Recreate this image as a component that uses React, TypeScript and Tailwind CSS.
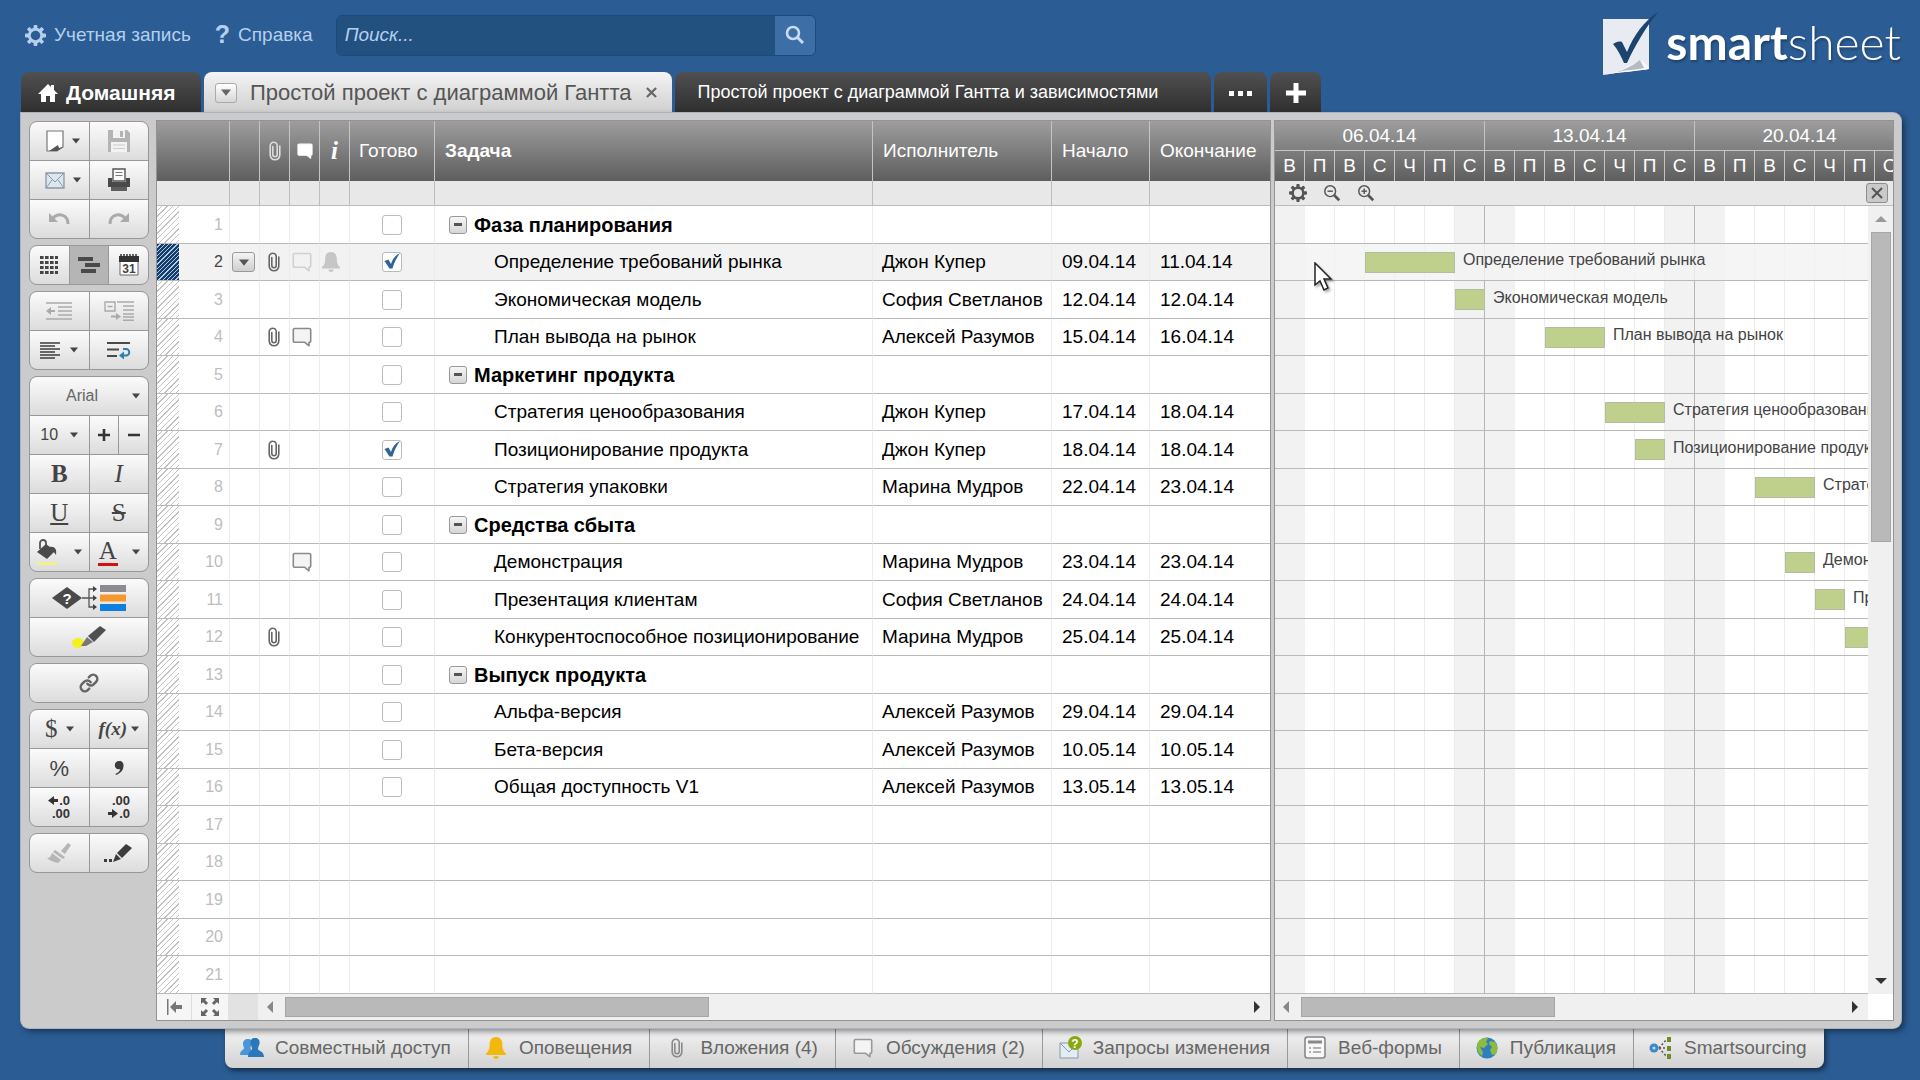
import React, { useState } from 'react';
import clsx from 'clsx';

type Task = {
  name?: string;
  phase?: boolean;
  owner?: string;
  start?: string;
  end?: string;
  done?: boolean;
  clip?: boolean;
  comment?: boolean;
  // day offset from 06.04.14 and length in days
  bar?: [number, number];
};

const DAY = 30;

const TASKS: Task[] = [
  { name: 'Фаза планирования', phase: true },
  { name: 'Определение требований рынка', owner: 'Джон Купер', start: '09.04.14', end: '11.04.14', done: true, clip: true, bar: [3, 3] },
  { name: 'Экономическая модель', owner: 'София Светланов', start: '12.04.14', end: '12.04.14', bar: [6, 1] },
  { name: 'План вывода на рынок', owner: 'Алексей Разумов', start: '15.04.14', end: '16.04.14', clip: true, comment: true, bar: [9, 2] },
  { name: 'Маркетинг продукта', phase: true },
  { name: 'Стратегия ценообразования', owner: 'Джон Купер', start: '17.04.14', end: '18.04.14', bar: [11, 2] },
  { name: 'Позиционирование продукта', owner: 'Джон Купер', start: '18.04.14', end: '18.04.14', done: true, clip: true, bar: [12, 1] },
  { name: 'Стратегия упаковки', owner: 'Марина Мудров', start: '22.04.14', end: '23.04.14', bar: [16, 2] },
  { name: 'Средства сбыта', phase: true },
  { name: 'Демонстрация', owner: 'Марина Мудров', start: '23.04.14', end: '23.04.14', comment: true, bar: [17, 1] },
  { name: 'Презентация клиентам', owner: 'София Светланов', start: '24.04.14', end: '24.04.14', bar: [18, 1] },
  { name: 'Конкурентоспособное позиционирование', owner: 'Марина Мудров', start: '25.04.14', end: '25.04.14', clip: true, bar: [19, 1] },
  { name: 'Выпуск продукта', phase: true },
  { name: 'Альфа-версия', owner: 'Алексей Разумов', start: '29.04.14', end: '29.04.14' },
  { name: 'Бета-версия', owner: 'Алексей Разумов', start: '10.05.14', end: '10.05.14' },
  { name: 'Общая доступность V1', owner: 'Алексей Разумов', start: '13.05.14', end: '13.05.14' },
  {}, {}, {}, {}, {},
];

const WEEKS = ['06.04.14', '13.04.14', '20.04.14'];
const DAYS = ['В', 'П', 'В', 'С', 'Ч', 'П', 'С'];

/* ---------- icons ---------- */

const Gear = ({ className }: { className?: string }) => (
  <svg viewBox="0 0 22 22" className={className} aria-hidden="true">
    <g fill="currentColor">
      {[0, 45, 90, 135].map((a) => (
        <rect key={a} x="9" y="0" width="4" height="22" rx="1" transform={`rotate(${a} 11 11)`} />
      ))}
      <circle cx="11" cy="11" r="8" />
    </g>
    <circle cx="11" cy="11" r="5" className="fill-(--hole)" />
  </svg>
);

const Magnifier = ({ className, sign }: { className?: string; sign?: '+' | '-' }) => (
  <svg viewBox="0 0 20 20" className={className} fill="none" stroke="currentColor" aria-hidden="true">
    <circle cx="8" cy="8" r="6" strokeWidth={sign ? 1.6 : 2.6} />
    <path d="M12.5 12.5 18 18" strokeWidth="3" />
    {sign && <path d="M5 8h6" strokeWidth="1.6" />}
    {sign === '+' && <path d="M8 5v6" strokeWidth="1.6" />}
  </svg>
);

const Clip = ({ className }: { className?: string }) => (
  <svg viewBox="0 0 12 20" className={className} fill="none" stroke="currentColor" strokeWidth="1.6" strokeLinecap="round" aria-hidden="true">
    <path d="M3.8 5.5v8a2.2 2.2 0 0 0 4.4 0V4.6A3.2 3.2 0 0 0 5 1.2 3.6 3.6 0 0 0 1.2 5v8.8A4.8 4.8 0 0 0 6 18.8a4.8 4.8 0 0 0 4.8-5V5" />
  </svg>
);

const Bubble = ({ className, fill = 'none' }: { className?: string; fill?: string }) => (
  <svg viewBox="0 0 20 20" className={className} fill={fill} stroke="currentColor" strokeWidth="1.6" strokeLinejoin="round" aria-hidden="true">
    <path d="M2.5 1.5h15a1.2 1.2 0 0 1 1.2 1.2v11.300a1.200 1.200 0 0 1-1.200 1.200H17v3.600l-4.500-3.600h-10a1.2 1.2 0 0 1-1.2-1.2V2.7a1.2 1.2 0 0 1 1.2-1.2Z" />
  </svg>
);

const Bell = ({ className }: { className?: string }) => (
  <svg viewBox="0 0 20 22" className={className} fill="currentColor" aria-hidden="true">
    <path d="M10 1c-3.6 0-5.8 2.6-5.8 6.2 0 4.4-.6 6.8-3.2 8.8v1.5h18V16c-2.6-2-3.2-4.4-3.2-8.8C15.8 3.6 13.6 1 10 1Z" />
    <path d="M7.5 18.5h5a2.500 2.500 0 0 1-5 0Z" />
  </svg>
);

const Caret = ({ className = 'size-2' }: { className?: string }) => (
  <svg viewBox="0 0 8 5" className={className} fill="currentColor" aria-hidden="true">
    <path d="M0 0h8L4 5Z" />
  </svg>
);

const Arrow = ({ dir, className }: { dir: 'left' | 'right' | 'up' | 'down'; className?: string }) => {
  const d = { left: 'M8 1v12L2 7Z', right: 'M6 1v12l6-6Z', up: 'M1 10h12L7 4Z', down: 'M1 4h12l-6 6Z' }[dir];
  return (
    <svg viewBox="0 0 14 14" className={clsx('size-[14px]', className)} fill="currentColor" aria-hidden="true">
      <path d={d} />
    </svg>
  );
};

const LogoMark = () => (
  <svg viewBox="0 0 60 66" className="h-[66px] w-[60px]" aria-hidden="true">
    <path d="M3 8h46v50C38 60 20 61 3 64Z" fill="#e9ebf2" />
    <path d="M3 64 16 61 41 49l8 7v2C38 60 20 61 3 64Z" fill="#f8f9fb" />
    <path d="M16 61c8-2 16-6 24-12l4 8c-9 2-18 2-28 4Z" fill="#b7bac2" />
    <path d="M13 33c3-2 6-3 9-2l5 10C34 24 44 10 58 1 47 15 35 34 27 52h-3c-3-7-6-13-11-19Z" fill="#1c446f" />
  </svg>
);

/* ---------- left toolbar ---------- */

function Tool({ label, active, className, children }: { label: string; active?: boolean; className?: string; children: React.ReactNode }) {
  return (
    <button
      type="button"
      aria-label={label}
      className={clsx(
        'flex h-[38px] min-w-0 flex-1 items-center justify-center text-[#444]',
        active ? 'bg-[#b5b5b5]' : 'bg-linear-to-b from-[#fbfbfb] to-[#dcdcdc]',
        className,
      )}
    >
      {children}
    </button>
  );
}

const Group = ({ children }: { children: React.ReactNode }) => (
  <div className="flex flex-col gap-px overflow-hidden rounded-lg border border-[#989898] bg-[#989898]">{children}</div>
);

const Row = ({ children }: { children: React.ReactNode }) => <div className="flex gap-px">{children}</div>;

function Toolbar() {
  return (
    <div role="toolbar" aria-label="Панель инструментов" className="flex w-[120px] shrink-0 flex-col gap-1.5">
      <Group>
        <Row>
          <Tool label="Создать" className="gap-2">
            <svg viewBox="0 0 18 22" className="ml-2 h-[22px] w-[18px]">
              <path d="M1 1h16v16l-6 4H1Z" fill="#fff" stroke="#777" strokeWidth="1.2" />
              <path d="m3 21 9-6 1 3 4-1-6 4Z" fill="#555" />
            </svg>
            <Caret />
          </Tool>
          <Tool label="Сохранить">
            <svg viewBox="0 0 22 22" className="size-[22px]">
              <path d="M0 0h19l3 3v19H0Z" fill="#b4b4b4" />
              <path d="M5 0h12v8H5zM3 12h16v10H3z" fill="#f2f2f2" />
              <path d="M12 1h3v6h-3z" fill="#b4b4b4" />
              <path d="M5 15h12M5 18.5h12" stroke="#ccc" />
            </svg>
          </Tool>
        </Row>
        <Row>
          <Tool label="Отправить" className="gap-2">
            <svg viewBox="0 0 20 17" className="ml-2 h-[17px] w-5">
              <path d="M1 1h18v15H1Z" fill="#dbe6f1" stroke="#8a97a5" strokeWidth="1.3" />
              <path d="m1 1 9 9 9-9M1 16l6-8M19 16l-6-8" fill="none" stroke="#8a97a5" />
            </svg>
            <Caret />
          </Tool>
          <Tool label="Печать">
            <svg viewBox="0 0 24 24" className="size-6">
              <path d="M6 1h12v12H6Z" fill="#fafafa" stroke="#555" strokeWidth="1.4" />
              <path d="M8.5 4.5h7M8.5 7.5h7" stroke="#777" />
              <path d="M1 10h4v4h14v-4h4v9H1Z" fill="#4a4a4a" />
              <path d="M4 19h16v4H4Z" fill="#5e5e5e" />
            </svg>
          </Tool>
        </Row>
        <Row>
          <Tool label="Отменить">
            <svg viewBox="0 0 22 14" className="h-[14px] w-[22px]">
              <path d="M5 6c6-6 15-3 15 6" fill="none" stroke="#aaa" strokeWidth="3" />
              <path d="M1 1v9h9Z" fill="#aaa" />
            </svg>
          </Tool>
          <Tool label="Повторить">
            <svg viewBox="0 0 22 14" className="h-[14px] w-[22px]">
              <path d="M17 6C11 0 2 3 2 12" fill="none" stroke="#aaa" strokeWidth="3" />
              <path d="M21 1v9h-9Z" fill="#aaa" />
            </svg>
          </Tool>
        </Row>
      </Group>

      <Group>
        <Row>
          <Tool label="Таблица">
            <svg viewBox="0 0 18 18" className="size-[18px]" fill="#444">
              {[0, 5, 10, 15].map((y) => [0, 5, 10, 15].map((x) => <rect key={`${x}-${y}`} x={x} y={y} width="3.6" height="3" />))}
            </svg>
          </Tool>
          <Tool label="Диаграмма Гантта" active>
            <svg viewBox="0 0 24 18" className="h-[18px] w-6" fill="#4a4a4a">
              <path d="M1 1h15v4H1zM8 7h15v4H8zM4 13h15v4H4z" />
            </svg>
          </Tool>
          <Tool label="Календарь">
            <svg viewBox="0 0 20 22" className="h-[22px] w-5">
              <path d="M1 3h18v18H1Z" fill="#fff" stroke="#666" />
              <path d="M0 2h20v6H0Z" fill="#333" />
              <path d="M2 2V0M5 2V0M8 2V0M11 2V0M14 2V0M17 2V0" stroke="#333" strokeWidth="1.5" />
              <text x="10" y="18.5" textAnchor="middle" fontSize="12" fontWeight="700" fill="#444">31</text>
            </svg>
          </Tool>
        </Row>
      </Group>

      <Group>
        <Row>
          <Tool label="Уменьшить отступ">
            <svg viewBox="0 0 26 18" className="h-[18px] w-[26px]" stroke="#aaa" strokeWidth="1.4" fill="none">
              <path d="M0 1h26M12 5h14M12 9h14M12 13h14M0 17h26" />
              <path d="M9 9H3" strokeWidth="2" />
              <path d="M5 5v8L0 9Z" fill="#aaa" stroke="none" />
            </svg>
          </Tool>
          <Tool label="Увеличить отступ">
            <svg viewBox="0 0 30 20" className="h-5 w-[30px]" stroke="#aaa" strokeWidth="1.4" fill="none">
              <path d="M1 1h10v9H1zM3.5 5.5h5" />
              <path d="M13 1h17M19 5h11M19 9h11M19 13h11M19 16h11M19 19.3h11" />
              <path d="M7 15.500h6" strokeWidth="2" />
              <path d="M12 12v7l5-3.5Z" fill="#aaa" stroke="none" />
            </svg>
          </Tool>
        </Row>
        <Row>
          <Tool label="Выравнивание" className="gap-2.5">
            <svg viewBox="0 0 20 17" className="h-[17px] w-5" stroke="#3c3c3c" strokeWidth="1.6">
              <path d="M0 1h20M0 4h15M0 7h20M0 10h15M0 13h20M0 16h15" />
            </svg>
            <Caret />
          </Tool>
          <Tool label="Перенос текста">
            <svg viewBox="0 0 24 17" className="h-[17px] w-6" fill="none">
              <path d="M0 1h23M0 7.500h12M0 14h10" stroke="#4a4a4a" strokeWidth="1.8" />
              <path d="M16 7h3a3 3 0 0 1 0 6.5h-3" stroke="#2f7fae" strokeWidth="2" />
              <path d="M17 9.5v8l-5-4Z" fill="#2f7fae" />
            </svg>
          </Tool>
        </Row>
      </Group>

      <Group>
        <Row>
          <Tool label="Шрифт" className="justify-end gap-[34px] pr-2">
            <span className="text-[16px] text-[#666]">Arial</span>
            <Caret />
          </Tool>
        </Row>
        <Row>
          <Tool label="Размер шрифта" className="gap-3">
            <span className="text-[16px]">10</span>
            <Caret />
          </Tool>
          <div className="flex flex-1 gap-px">
            <Tool label="Увеличить">
              <svg viewBox="0 0 12 12" className="size-3"><path d="M6 0v12M0 6h12" stroke="#333" strokeWidth="2.6" /></svg>
            </Tool>
            <Tool label="Уменьшить">
              <svg viewBox="0 0 12 12" className="size-3"><path d="M0 6h12" stroke="#333" strokeWidth="2.6" /></svg>
            </Tool>
          </div>
        </Row>
        <Row>
          <Tool label="Полужирный" className="font-['Liberation_Serif',serif] text-[25px] font-bold">B</Tool>
          <Tool label="Курсив" className="font-['Liberation_Serif',serif] text-[25px] italic">I</Tool>
        </Row>
        <Row>
          <Tool label="Подчеркнутый" className="font-['Liberation_Serif',serif] text-[25px] underline">U</Tool>
          <Tool label="Зачеркнутый" className="font-['Liberation_Serif',serif] text-[25px] line-through">S</Tool>
        </Row>
        <Row>
          <Tool label="Цвет фона" className="gap-3.5">
            <svg viewBox="0 0 24 26" className="h-[26px] w-6">
              <path d="M4 10V4a3 3 0 0 1 6 0v6" fill="none" stroke="#555" strokeWidth="1.8" />
              <path d="m1 13 9-8 9 7-8 8Z" fill="#4a4a4a" />
              <path d="M13 8c6-1 8 2 7 8l-3-4Z" fill="#4a4a4a" />
              <path d="M1 23h20v3H1Z" fill="#f3f08a" />
            </svg>
            <Caret />
          </Tool>
          <Tool label="Цвет текста" className="gap-3.5">
            <span className="h-[27px] w-5 border-b-[3px] border-[#d21212] text-center font-['Liberation_Serif',serif] text-[25px] leading-6">A</span>
            <Caret />
          </Tool>
        </Row>
      </Group>

      <Group>
        <Row>
          <Tool label="Условное форматирование">
            <svg viewBox="0 0 74 28" className="h-7 w-[74px]">
              <path d="M0 14 15 3l15 11-15 11Z" fill="#4a4a4a" />
              <text x="15" y="19.5" textAnchor="middle" fontSize="15" fontWeight="700" fill="#fff">?</text>
              <path d="M30 14h14M37 14V5h7M37 14v9h7" stroke="#555" strokeWidth="1.3" fill="none" />
              <path d="m41 2 4 3-4 3zM41 11l4 3-4 3zM41 20l4 3-4 3z" fill="#444" />
              <path d="M48 1h26v7H48Z" fill="#8b8b90" />
              <path d="M48 10.500h26v7H48Z" fill="#f7972f" />
              <path d="M48 20h26v7H48Z" fill="#0c7fe0" />
            </svg>
          </Tool>
        </Row>
        <Row>
          <Tool label="Выделить изменения">
            <svg viewBox="0 0 34 24" className="h-6 w-[34px]">
              <ellipse cx="6" cy="18" rx="6" ry="5" fill="#f6f01c" />
              <path d="m9 21 6-9 6 5-7 4Z" fill="#777" />
              <path d="m16 11 12-10 6 4-12 12Z" fill="#4f4f4f" />
            </svg>
          </Tool>
        </Row>
      </Group>

      <Group>
        <Row>
          <Tool label="Гиперссылка">
            <svg viewBox="0 0 24 24" className="size-5" fill="none" stroke="#666" strokeWidth="3" strokeLinecap="round">
              <path d="M10 13a5 5 0 0 0 7.54.54l3-3a5 5 0 0 0-7.07-7.07l-1.72 1.71" />
              <path d="M14 11a5 5 0 0 0-7.54-.54l-3 3a5 5 0 0 0 7.07 7.07l1.71-1.71" />
            </svg>
          </Tool>
        </Row>
      </Group>

      <Group>
        <Row>
          <Tool label="Денежный формат" className="gap-2">
            <span className="font-['Liberation_Serif',serif] text-[25px]">$</span>
            <Caret />
          </Tool>
          <Tool label="Функции" className="gap-1">
            <span className="font-['Liberation_Serif',serif] text-[19px] font-bold italic">f(x)</span>
            <Caret />
          </Tool>
        </Row>
        <Row>
          <Tool label="Процентный формат" className="text-[22px]">%</Tool>
          <Tool label="Разделитель">
            <svg viewBox="0 0 10 14" className="h-[14px] w-2.5" fill="#3c3c3c">
              <path d="M5 0a4 4 0 0 1 4.500 4.500C9.500 9 7 12 2 14l-.5-1c3-1.500 4.500-3 4.500-5C3 9 .8 7 .8 4.300A4.200 4.200 0 0 1 5 0Z" />
            </svg>
          </Tool>
        </Row>
        <Row>
          <Tool label="Уменьшить разрядность">
            <svg viewBox="0 0 24 32" className="h-8 w-6" fill="#333">
              <path d="M11 8H7V5L1 9.500 7 14v-3h4Z" />
              <text x="23" y="14" textAnchor="end" fontSize="13" fontWeight="700">.0</text>
              <text x="23" y="27" textAnchor="end" fontSize="13" fontWeight="700">.00</text>
            </svg>
          </Tool>
          <Tool label="Увеличить разрядность">
            <svg viewBox="0 0 24 32" className="h-8 w-6" fill="#333">
              <text x="23" y="14" textAnchor="end" fontSize="13" fontWeight="700">.00</text>
              <path d="M1 21h4v-3l6 4.500L5 27v-3H1Z" />
              <text x="23" y="27" textAnchor="end" fontSize="13" fontWeight="700">.0</text>
            </svg>
          </Tool>
        </Row>
      </Group>

      <Group>
        <Row>
          <Tool label="Формат по образцу">
            <svg viewBox="0 0 24 20" className="h-5 w-6" fill="#b5b5b5">
              <path d="m14 8 7-8 3 2-6 9Z" />
              <path d="m8 7 10 7-2 2L6 9Z" />
              <path d="m5 10 9 7-3 3c-4-1-8-2-11-5 3 0 4-2 5-5Z" />
            </svg>
          </Tool>
          <Tool label="Журнал">
            <svg viewBox="0 0 30 20" className="h-5 w-[30px]" fill="#3c3c3c">
              <path d="M0 16h3v3H0zM5 16h3v3H5zM9 19l3-8 5 5Z" />
              <path d="m13 10 9-9 6 4-10 10Z" />
            </svg>
          </Tool>
        </Row>
      </Group>
    </div>
  );
}

/* ---------- sheet ---------- */

function DoneBox({ label, initial }: { label: string; initial: boolean }) {
  const [on, setOn] = useState(initial);
  return (
    <span className="relative mx-auto block size-5">
      <input
        type="checkbox"
        aria-label={label}
        checked={on}
        onChange={() => setOn(!on)}
        className="block size-5 appearance-none rounded-[3px] border border-[#bbb] bg-white"
      />
      {on && (
        <svg viewBox="0 0 20 20" className="pointer-events-none absolute inset-0 size-5" aria-hidden="true">
          <path d="m2.500 9 4-1.500 2.500 4.500C10.500 7 13 3.500 18 1c-3.500 5-6 10-7.500 15.500H7.500Z" fill="#2f6496" />
        </svg>
      )}
    </span>
  );
}

const headCell = 'h-[60px] border-r border-[#c4c4c4] p-0 font-normal';
const bandCell = 'h-[25px] border-r border-b border-[#bcbcbc] p-0';

function Sheet() {
  return (
    <div className="flex w-[1113px] shrink-0 flex-col bg-white shadow-[0_0_0_1px_#939393]">
      <table className="w-full table-fixed border-separate border-spacing-0">
        <colgroup>
          <col className="w-[22px]" />
          <col className="w-[51px]" />
          <col className="w-[30px]" />
          <col className="w-[30px]" />
          <col className="w-[30px]" />
          <col className="w-[30px]" />
          <col className="w-[85px]" />
          <col />
          <col className="w-[179px]" />
          <col className="w-[98px]" />
          <col className="w-[120px]" />
        </colgroup>
        <thead className="text-left text-[19px] text-white">
          <tr className="bg-linear-to-b from-[#9e9e9e] to-[#5e5e5e]">
            <th colSpan={2} className={headCell} aria-label="Номер строки" />
            <th className={headCell} aria-label="Меню" />
            <th className={headCell} aria-label="Вложения"><Clip className="mx-auto h-5 w-3 text-[#dcdcdc]" /></th>
            <th className={headCell} aria-label="Обсуждения"><Bubble className="mx-auto size-4 text-white" fill="#fff" /></th>
            <th className={clsx(headCell, 'text-center')} aria-label="Сведения">
              <span className="font-['Liberation_Serif',serif] text-[25px] font-bold italic">i</span>
            </th>
            <th className={clsx(headCell, 'pl-[9px]')}>Готово</th>
            <th className={headCell}><span className="pl-2.5 font-bold">Задача</span></th>
            <th className={clsx(headCell, 'pl-2.5')}>Исполнитель</th>
            <th className={clsx(headCell, 'pl-2.5')}>Начало</th>
            <th className="h-[60px] p-0 pl-2.5 font-normal">Окончание</th>
          </tr>
          <tr className="bg-[#e8e8e8]">
            <td colSpan={2} className={bandCell} />
            <td className={bandCell} />
            <td className={bandCell} />
            <td className={bandCell} />
            <td className={bandCell} />
            <td className={bandCell} />
            <td className={bandCell} />
            <td className={bandCell} />
            <td className={bandCell} />
            <td className="h-[25px] border-b border-[#bcbcbc] p-0" />
          </tr>
        </thead>
        <tbody className="text-[19px] leading-6 text-black [&_td]:border-b [&_td]:border-b-[#b9b9b9] [&_td]:p-0 [&_td]:whitespace-nowrap">
          {TASKS.map((t, i) => {
            const current = i === 1;
            const cell = 'border-r border-r-[#ececec]';
            return (
              <tr key={i} className={clsx(i % 2 ? 'h-[37px]' : 'h-[38px]', current && 'bg-[#f2f2f2]')}>
                <td
                  className={
                    current
                      ? 'bg-[repeating-linear-gradient(135deg,#123f70_0,#123f70_2px,#b9cadb_2px,#b9cadb_3px)]'
                      : 'bg-[repeating-linear-gradient(135deg,#fff_0,#fff_3px,#c2c2c2_3px,#c2c2c2_4px)]'
                  }
                />
                <td className={clsx(cell, 'text-right text-[16px]', current ? 'text-[#444]' : 'text-[#bdbdbd]')}>
                  <span className="pr-1.5">{i + 1}</span>
                </td>
                <td className={cell}>
                  {current && (
                    <button type="button" aria-label="Меню строки" className="ml-0.5 flex h-5 w-[23px] items-center justify-center rounded-[3px] border border-[#999] bg-linear-to-b from-[#f4f4f4] to-[#cfcfcf] text-[#555]">
                      <Caret className="h-[7px] w-2.5" />
                    </button>
                  )}
                </td>
                <td className={cell}>{t.clip && <Clip className="ml-2 h-5 w-3 text-[#666]" />}</td>
                <td className={cell}>
                  {t.comment && <Bubble className="ml-0.5 size-5 text-[#8a8a8a]" fill="#f4f4f4" />}
                  {current && <Bubble className="ml-0.5 size-5 text-[#d0d0d0]" />}
                </td>
                <td className={cell}>{current && <Bell className="ml-px h-[22px] w-5 text-[#c6c6c6]" />}</td>
                <td className={cell}>
                  {t.name && <DoneBox label={`Готово: ${t.name}`} initial={!!t.done} />}
                </td>
                <td className={cell}>
                  {t.phase ? (
                    <div className="flex items-center gap-[7px] pl-3.5 text-[20px] font-bold">
                      <button type="button" aria-label="Свернуть" className="flex size-[18px] items-center justify-center rounded-[3px] border border-[#999] bg-linear-to-b from-[#f6f6f6] to-[#d6d6d6]">
                        <span className="h-[3px] w-2 bg-[#555]" />
                      </button>
                      {t.name}
                    </div>
                  ) : (
                    <div className="pl-[59px]">{t.name}</div>
                  )}
                </td>
                <td className={cell}><span className="pl-[9px]">{t.owner}</span></td>
                <td className={cell}><span className="pl-2.5">{t.start}</span></td>
                <td><span className="pl-2.5">{t.end}</span></td>
              </tr>
            );
          })}
        </tbody>
      </table>
      <div className="flex h-[26px] items-center bg-[#f0f0f0]">
        <button type="button" aria-label="К началу" className="flex h-full w-[35px] items-center justify-center border-r border-[#ddd] bg-[#f6f6f6]">
          <svg viewBox="0 0 16 16" className="size-4" fill="#777"><path d="M1 0h1.500v16H1zM4 8l6-6v4h6v4h-6v4Z" /></svg>
        </button>
        <button type="button" aria-label="Развернуть" className="flex h-full w-9 items-center justify-center bg-[#f6f6f6]">
          <svg viewBox="0 0 20 20" className="size-5" fill="none" stroke="#666" strokeWidth="3">
            <path d="m2 2 5 5M18 2l-5 5M2 18l5-5M18 18l-5-5" />
            <path d="M1 1h6L1 7ZM19 1h-6l6 6ZM1 19h6l-6-6ZM19 19h-6l6-6Z" fill="#666" stroke="none" />
          </svg>
        </button>
        <span className="h-full w-[30px] bg-[#e2e2e2]" />
        <span className="flex w-[27px] justify-center text-[#888]"><Arrow dir="left" /></span>
        <span className="h-5 w-[424px] border border-[#a6a6a6] bg-[#b9b9b9]" />
        <Arrow dir="right" className="mr-2 ml-auto text-[#333]" />
      </div>
    </div>
  );
}

/* ---------- gantt ---------- */

function Gantt() {
  return (
    <div className="relative flex min-w-0 flex-1 flex-col bg-white shadow-[0_0_0_1px_#939393]">
      <div className="flex h-[60px] overflow-hidden bg-linear-to-b from-[#9e9e9e] to-[#5e5e5e] text-white">
        {WEEKS.map((w) => (
          <div key={w} className="flex w-[210px] shrink-0 flex-col">
            <div className="h-[30px] border-r border-b border-[#c4c4c4] text-center text-[19px] leading-[30px]">{w}</div>
            <div className="flex h-[30px]">
              {DAYS.map((d, i) => (
                <span key={i} className="w-[30px] border-r border-[#c4c4c4] text-center text-[19px] leading-[30px]">{d}</span>
              ))}
            </div>
          </div>
        ))}
      </div>
      <div className="flex h-[25px] items-center gap-4 border-b border-[#bcbcbc] bg-[#e8e8e8] pr-[5px] pl-[14px] text-[#555] [--hole:#e8e8e8]">
        <button type="button" aria-label="Настройки"><Gear className="size-[18px]" /></button>
        <button type="button" aria-label="Уменьшить масштаб"><Magnifier sign="-" className="size-[18px]" /></button>
        <button type="button" aria-label="Увеличить масштаб"><Magnifier sign="+" className="size-[18px]" /></button>
        <button type="button" aria-label="Закрыть диаграмму" className="ml-auto flex h-5 w-[22px] items-center justify-center rounded-[3px] border border-[#8d8d8d] bg-[#c9c9c9]">
          <svg viewBox="0 0 12 12" className="size-3"><path d="m1 1 10 10M11 1 1 11" stroke="#555" strokeWidth="2" /></svg>
        </button>
      </div>
      <div className="flex">
        <div className="min-w-0 flex-1 overflow-hidden bg-[repeating-linear-gradient(90deg,#f2f2f2_0,#f2f2f2_30px,transparent_30px,transparent_180px,#f2f2f2_180px,#f2f2f2_209px,#b5b5b5_209px,#b5b5b5_210px),repeating-linear-gradient(90deg,transparent_0,transparent_29px,#ececec_29px,#ececec_30px)]">
          {TASKS.map((t, i) => (
            <div
              key={i}
              className={clsx(
                'flex items-center overflow-hidden border-b border-[#b9b9b9] whitespace-nowrap',
                i % 2 ? 'h-[37px]' : 'h-[38px]',
                i === 1 && 'bg-[#f2f2f2]/80',
              )}
            >
              {t.bar && (
                <>
                  <span
                    className="h-[21px] shrink-0 border border-[#b4bda4] bg-[#bfd08d]"
                    style={{ marginLeft: t.bar[0] * DAY, width: t.bar[1] * DAY }}
                  />
                  <span className="pb-1 pl-2 text-[16px] leading-5 text-[#444]">{t.name}</span>
                </>
              )}
            </div>
          ))}
        </div>
        <div className="flex w-[25px] flex-col items-center bg-[#f0f0f0] py-1.5">
          <Arrow dir="up" className="text-[#999]" />
          <span className="mt-1.5 h-[310px] w-5 border border-[#a6a6a6] bg-[#b9b9b9]" />
          <Arrow dir="down" className="mt-auto text-[#333]" />
        </div>
      </div>
      <div className="flex h-[26px]">
        <div className="flex min-w-0 flex-1 items-center bg-[#f0f0f0]">
          <span className="flex w-[26px] justify-center text-[#888]"><Arrow dir="left" /></span>
          <span className="h-5 w-[254px] border border-[#a6a6a6] bg-[#b9b9b9]" />
          <Arrow dir="right" className="mr-2 ml-auto text-[#333]" />
        </div>
        <span className="w-[25px] bg-white" />
      </div>
      {/* pointer over the second row */}
      <svg viewBox="0 0 20 30" className="pointer-events-none absolute top-[141px] left-[39px] h-[30px] w-5 drop-shadow-[2px_2px_1px_rgba(0,0,0,0.3)]" aria-hidden="true">
        <path d="M1 1v22l5-4 4 9 4-2-4-9h7Z" fill="#fff" stroke="#222" strokeWidth="1.5" />
      </svg>
    </div>
  );
}

/* ---------- bottom tabs ---------- */

const Glyph = ({ children }: { children: React.ReactNode }) => (
  <svg viewBox="0 0 24 24" className="size-6" aria-hidden="true">{children}</svg>
);

const BOTTOM_TABS = [
  {
    label: 'Совместный доступ',
    icon: (
      <Glyph>
        <path d="M8 3c3 0 4 2 3.5 5-.5 2-1 3-1 4 0 2 3 2 3 7H0c0-5 4-5 4-7 0-1-1-2-1-4-.3-3 2-5 5-5Z" fill="#4a96d8" />
        <path d="M15 2c4 0 5 3 4.5 6-.5 2-1.5 3-1.5 5 0 2 6 2 6 8H8c0-6 4-6 4-8 0-2-1-3-1.5-5C10 5 11 2 15 2Z" fill="#2a77bb" />
      </Glyph>
    ),
  },
  { label: 'Оповещения', icon: <Bell className="size-6 text-[#f2b90c]" /> },
  { label: 'Вложения (4)', icon: <Clip className="mx-1.5 h-5 w-3 text-[#8a8a8a]" /> },
  { label: 'Обсуждения (2)', icon: <Bubble className="mx-0.5 size-5 text-[#999]" fill="#f4f4f4" /> },
  {
    label: 'Запросы изменения',
    icon: (
      <Glyph>
        <path d="M2 7h18v15H2Z" fill="#e2ecf6" stroke="#8a97a5" />
        <path d="m2 7 9 9 9-9" fill="none" stroke="#8a97a5" />
        <circle cx="17" cy="7" r="7" fill="#8aa80e" />
        <text x="17" y="11.5" textAnchor="middle" fontSize="12" fontWeight="700" fill="#fff">?</text>
      </Glyph>
    ),
  },
  {
    label: 'Веб-формы',
    icon: (
      <Glyph>
        <rect x="2" y="1" width="20" height="21" rx="2.5" fill="#f8f8f8" stroke="#888" strokeWidth="1.6" />
        <path d="M5 6h14" stroke="#888" strokeWidth="3" />
        <path d="M6 12h2M10 12h8M6 16h2M10 16h8" stroke="#999" strokeWidth="1.5" />
      </Glyph>
    ),
  },
  {
    label: 'Публикация',
    icon: (
      <Glyph>
        <circle cx="12" cy="12" r="10.5" fill="#2f7fc0" />
        <path d="M3 6c3-4 7-5 10-4l-2 4 2 2-4 4-4-1 3 5-1 4C2 17 1 11 3 6ZM15 5l5 1c3 4 3 8 1 12l-4 1-2-5 2-3-3-3Z" fill="#8dbb3b" />
      </Glyph>
    ),
  },
  {
    label: 'Smartsourcing',
    icon: (
      <Glyph>
        <circle cx="5" cy="12" r="4.5" fill="#3d88c8" />
        <circle cx="5" cy="12" r="1.5" fill="#bcdcf4" />
        <path d="m10 12 8-9M10 12h8M10 12l8 9" stroke="#555" strokeWidth="1.5" strokeDasharray="2 2" />
        <path d="M18 1h4v5h-4zM18 10h4v5h-4zM18 18h4v5h-4z" fill="#6f8c2c" />
      </Glyph>
    ),
  },
];

const darkTab = 'flex h-full items-center rounded-t-lg bg-linear-to-b from-[#505050] to-[#2f2f2f] text-white';

export default function App() {
  const [query, setQuery] = useState('');

  return (
    <div className="flex min-h-screen flex-col bg-[#2b5c93] pr-[19px] pl-[21px] font-['Liberation_Sans',Arial,sans-serif]">
      <header className="flex h-[72px] items-center pb-0.5 text-[19px] text-[#b4d0ee]">
        <a href="#account" className="ml-1 flex items-center gap-2 [--hole:#2b5c93]">
          <Gear className="size-[21px]" />
          Учетная запись
        </a>
        <a href="#help" className="ml-6 flex items-center gap-2">
          <span className="text-[25px] font-bold">?</span>
          Справка
        </a>
        <form role="search" className="ml-[23px] flex h-[41px] w-[480px] overflow-hidden rounded-md border border-[#1c4a7c]" onSubmit={(e) => e.preventDefault()}>
          <input
            type="text"
            aria-label="Поиск"
            placeholder="Поиск..."
            value={query}
            onChange={(e) => setQuery(e.target.value)}
            className="min-w-0 flex-1 bg-[#22507f] px-2 text-[19px] text-white italic outline-none placeholder:text-[#b4d0ee]"
          />
          <button type="submit" aria-label="Найти" className="flex w-10 items-center justify-center bg-[#3d6ea6] text-[#c4dcf4]">
            <Magnifier className="size-5" />
          </button>
        </form>
        <div className="ml-auto flex items-center gap-1.5 pt-[18px] text-white">
          <LogoMark />
          <span className="pb-1 font-[Lato,sans-serif] text-[48px] leading-none drop-shadow-[1px_2px_1px_rgba(0,0,0,0.3)]">
            <span className="font-bold">smart</span>
            <span className="font-light">sheet</span>
          </span>
        </div>
      </header>

      <nav aria-label="Вкладки" className="flex h-[41px] gap-[3px]">
        <button type="button" className={clsx(darkTab, 'w-[180px] gap-2 pl-[17px] text-[21px] font-bold')}>
          <svg viewBox="0 0 20 18" className="h-[18px] w-5" fill="#fff" aria-hidden="true">
            <path d="M10 0 0 10h3v8h5v-6h4v6h5v-8h3l-4-4V1h-3v2Z" />
          </svg>
          Домашняя
        </button>
        <div className="flex h-full items-center rounded-t-lg bg-linear-to-b from-[#f4f4f4] to-[#cfcfcf] pr-2.5 pl-[11px]">
          <button type="button" aria-label="Меню вкладки" className="flex h-5 w-[22px] items-center justify-center rounded-[3px] border border-[#aaa] bg-linear-to-b from-white to-[#d6d6d6] text-[#666]">
            <Caret className="h-[7px] w-2.5" />
          </button>
          <a href="#gantt" className="pr-2.5 pl-[13px] text-[22px] text-[#555]">Простой проект с диаграммой Гантта</a>
          <button type="button" aria-label="Закрыть вкладку" className="flex size-5 items-center justify-center">
            <svg viewBox="0 0 12 12" className="size-[11px]"><path d="m1 1 10 10M11 1 1 11" stroke="#666" strokeWidth="2.4" /></svg>
          </button>
        </div>
        <a href="#dependencies" className={clsx(darkTab, 'pr-[53px] pl-[23px] text-[18px]')}>
          Простой проект с диаграммой Гантта и зависимостями
        </a>
        <button type="button" aria-label="Другие вкладки" className={clsx(darkTab, 'w-[53px] justify-center')}>
          <svg viewBox="0 0 24 6" className="h-1.5 w-6" fill="#fff"><path d="M0 1h5v5H0zM9 1h5v5H9zM18 1h5v5h-5z" /></svg>
        </button>
        <button type="button" aria-label="Новая вкладка" className={clsx(darkTab, 'w-[51px] justify-center')}>
          <svg viewBox="0 0 20 20" className="size-5"><path d="M10 0v20M0 10h20" stroke="#fff" strokeWidth="5" /></svg>
        </button>
      </nav>

      <main className="relative flex gap-2 rounded-r-lg rounded-bl-lg bg-[#cbcbcb] p-2 shadow-[0_0_0_1px_#a9b4c0,3px_3px_6px_rgba(0,0,0,0.5)]">
        <Toolbar />
        <div className="flex min-w-0 flex-1 gap-[5px]">
          <Sheet />
          <Gantt />
        </div>
      </main>

      <footer className="flex pl-[204px]">
        <div className="flex h-10 overflow-hidden rounded-b-lg bg-linear-to-b from-[#f4f4f4] to-[#d2d2d2] shadow-[2px_3px_5px_rgba(0,0,0,0.5)]">
          {BOTTOM_TABS.map((t) => (
            <button
              key={t.label}
              type="button"
              className="flex items-center gap-[11px] border-r border-[#999] pr-[17px] pl-[15px] text-[19px] text-[#666] last:border-r-0"
            >
              {t.icon}
              {t.label}
            </button>
          ))}
        </div>
      </footer>
    </div>
  );
}
